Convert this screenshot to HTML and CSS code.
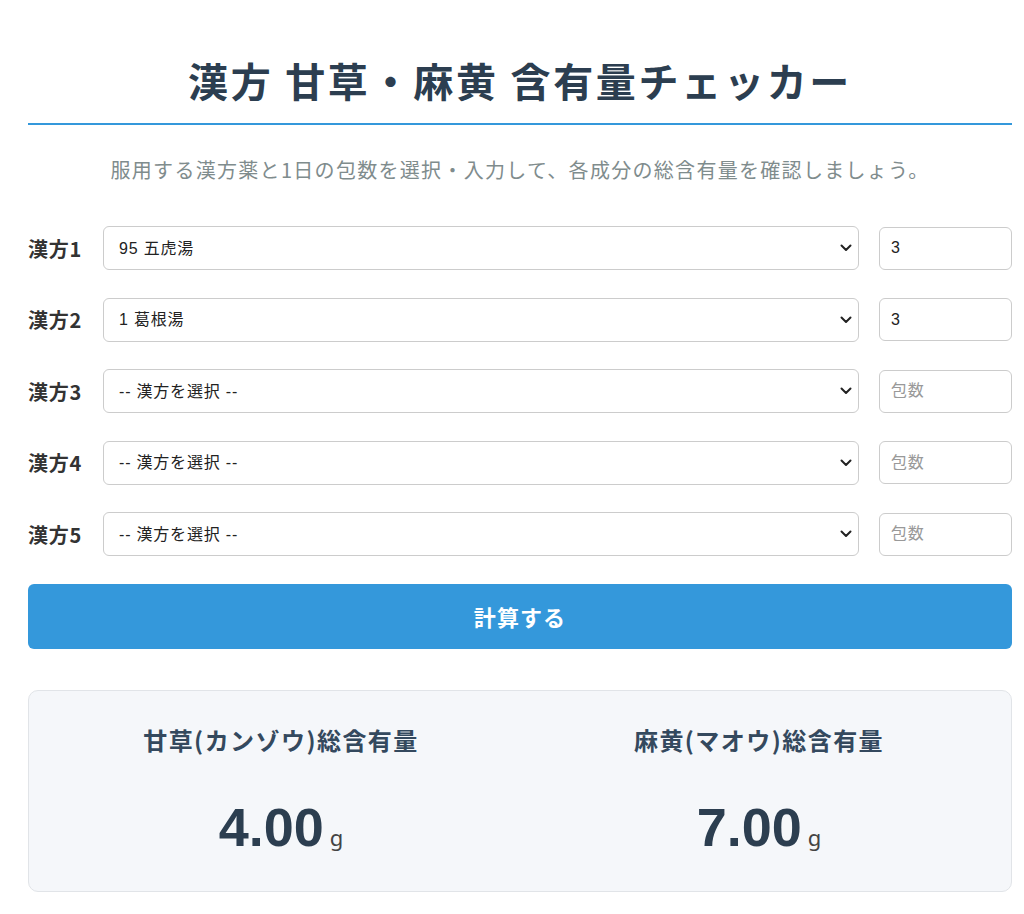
FILE: index.html
```html
<!DOCTYPE html>
<html lang="ja">
<head>
    <meta charset="UTF-8">
    <meta name="viewport" content="width=device-width, initial-scale=1.0">
    <title>漢方 甘草・麻黄 含有量チェッカー</title>
    <link rel="stylesheet" href="styles.css">
</head>
<body>
    <div class="container">
        <h1 class="title">漢方 甘草・麻黄 含有量チェッカー</h1>
        <p class="lead">服用する漢方薬と1日の包数を選択・入力して、各成分の総含有量を確認しましょう。</p>

        <div class="rows">
            <div class="row">
                <label class="row-label" for="k1">漢方1</label>
                <select id="k1" class="kampo">
                    <option>-- 漢方を選択 --</option>
                    <option>1 葛根湯</option>
                    <option selected>95 五虎湯</option>
                </select>
                <input type="number" class="count" placeholder="包数" value="3">
            </div>
            <div class="row">
                <label class="row-label" for="k2">漢方2</label>
                <select id="k2" class="kampo">
                    <option>-- 漢方を選択 --</option>
                    <option selected>1 葛根湯</option>
                    <option>95 五虎湯</option>
                </select>
                <input type="number" class="count" placeholder="包数" value="3">
            </div>
            <div class="row">
                <label class="row-label" for="k3">漢方3</label>
                <select id="k3" class="kampo">
                    <option selected>-- 漢方を選択 --</option>
                    <option>1 葛根湯</option>
                    <option>95 五虎湯</option>
                </select>
                <input type="number" class="count" placeholder="包数">
            </div>
            <div class="row">
                <label class="row-label" for="k4">漢方4</label>
                <select id="k4" class="kampo">
                    <option selected>-- 漢方を選択 --</option>
                    <option>1 葛根湯</option>
                    <option>95 五虎湯</option>
                </select>
                <input type="number" class="count" placeholder="包数">
            </div>
            <div class="row">
                <label class="row-label" for="k5">漢方5</label>
                <select id="k5" class="kampo">
                    <option selected>-- 漢方を選択 --</option>
                    <option>1 葛根湯</option>
                    <option>95 五虎湯</option>
                </select>
                <input type="number" class="count" placeholder="包数">
            </div>
        </div>

        <button class="calc" type="button">計算する</button>

        <div class="results">
            <div class="result">
                <h2 class="result-title">甘草(カンゾウ)総含有量</h2>
                <p class="result-value"><span class="num">4.00</span><span class="unit">g</span></p>
            </div>
            <div class="result">
                <h2 class="result-title">麻黄(マオウ)総含有量</h2>
                <p class="result-value"><span class="num">7.00</span><span class="unit">g</span></p>
            </div>
        </div>
    </div>
</body>
</html>
```

FILE: styles.css
```css
body {
    margin: 0;
    background-color: #fff;
    font-family: "Noto Sans CJK JP", "Noto Sans", sans-serif;
    color: #333;
    letter-spacing: 0.05em;
}
.container {
    margin: 0 12px 0 28px;
    padding-top: 56px;
    padding-bottom: 22px;
}
.title {
    margin: 0;
    padding-bottom: 19px;
    border-bottom: 2px solid #3498db;
    font-size: 40px;
    line-height: 48px;
    font-weight: 700;
    color: #2c3e50;
    text-align: center;
    letter-spacing: 2.7px;
}
.lead {
    margin: 30px 0 41px;
    font-size: 20px;
    line-height: 30px;
    color: #7f8c8d;
    text-align: center;
    letter-spacing: 1.3px;
}
.rows {
    display: flex;
    flex-direction: column;
    gap: 27.5px;
}
.row {
    display: flex;
    align-items: center;
}
.row-label {
    flex: 0 0 75px;
    font-size: 20px;
    font-weight: 700;
    color: #333;
}
.kampo {
    flex: 1;
    height: 44px;
    padding: 0 32px 0 15px;
    border: 1px solid #ccc;
    border-radius: 6px;
    background-color: #fff;
    background-image: url("data:image/svg+xml,%3Csvg xmlns='http://www.w3.org/2000/svg' width='12' height='8' viewBox='0 0 12 8'%3E%3Cpath d='M1.5 1.5 6 6l4.5-4.5' fill='none' stroke='%23222' stroke-width='2' stroke-linecap='round' stroke-linejoin='round'/%3E%3C/svg%3E");
    background-repeat: no-repeat;
    background-position: right 6px center;
    appearance: none;
    -webkit-appearance: none;
    font-family: "Liberation Sans", "Noto Sans CJK JP", sans-serif;
    font-size: 16px;
    color: #222;
    letter-spacing: 0.05em;
}
.count {
    width: 133px;
    height: 43px;
    margin-left: 20px;
    padding: 0 11px;
    box-sizing: border-box;
    border: 1px solid #ccc;
    border-radius: 6px;
    font-family: "Liberation Sans", "Noto Sans CJK JP", sans-serif;
    font-size: 16px;
    color: #222;
    letter-spacing: 0.05em;
}
.count::placeholder {
    color: #999;
}
.calc {
    display: block;
    width: 100%;
    margin-top: 28px;
    padding: 16px 0;
    border: none;
    border-radius: 6px;
    background-color: #3498db;
    color: #fff;
    font-family: inherit;
    font-size: 22px;
    line-height: 33px;
    font-weight: 700;
    letter-spacing: 0.05em;
    cursor: pointer;
}
.results {
    display: grid;
    grid-template-columns: 1fr 1fr;
    column-gap: 20px;
    margin-top: 41px;
    padding: 31px 23px 19px;
    border: 1px solid #e1e4e8;
    border-radius: 10px;
    background-color: #f5f7fa;
}
.result {
    text-align: center;
}
.result-title {
    margin: 0;
    font-size: 24px;
    line-height: 36px;
    font-weight: 700;
    color: #34495e;
    letter-spacing: 1.45px;
}
.result-value {
    margin: 37px 0 0;
    line-height: 65px;
}
.num {
    font-family: "Liberation Sans", Arial, sans-serif;
    font-size: 54px;
    font-weight: 700;
    color: #2c3e50;
    letter-spacing: 0;
}
.unit {
    margin-left: 6px;
    font-family: "Noto Sans", sans-serif;
    font-size: 22px;
    color: #444;
    letter-spacing: 0;
}
```
